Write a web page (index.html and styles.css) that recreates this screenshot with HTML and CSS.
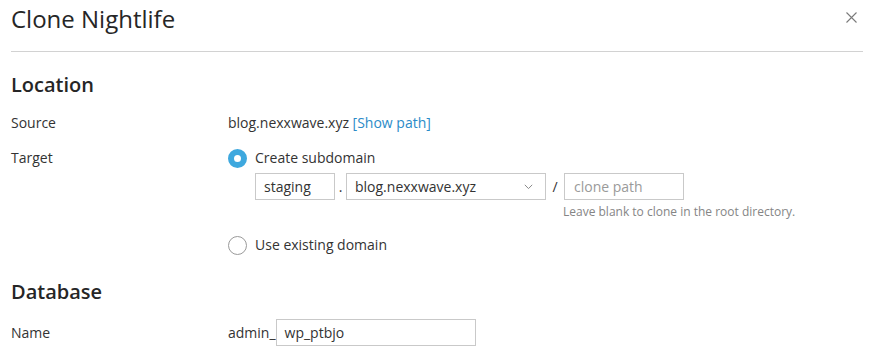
FILE: index.html
```html
<!DOCTYPE html>
<html lang="en">
<head>
<meta charset="utf-8">
<title>Clone Nightlife</title>
<link rel="stylesheet" href="styles.css">
</head>
<body>
<div class="dialog">
  <header class="dialog-header">
    <h1 class="dialog-title">Clone Nightlife</h1>
    <button class="close-btn" aria-label="Close">
      <svg width="11" height="11" viewBox="0 0 11 11"><path d="M0.5 0.5 L10.5 10.5 M10.5 0.5 L0.5 10.5" stroke="#7a7a7a" stroke-width="1.1" fill="none"/></svg>
    </button>
  </header>

  <section class="section">
    <h2 class="section-title">Location</h2>
    <div class="row row-source">
      <div class="label">Source</div>
      <div class="value">blog.nexxwave.xyz <a class="link" href="#">[Show path]</a></div>
    </div>
    <div class="row row-target">
      <div class="label">Target</div>
      <div class="value">
        <label class="radio-line">
          <span class="radio radio-checked"></span>
          <span>Create subdomain</span>
        </label>
        <div class="sub-fields">
          <div class="input input-sub">staging</div>
          <span class="sep">.</span>
          <div class="input select">
            <span>blog.nexxwave.xyz</span>
            <svg class="chevron" width="9" height="6" viewBox="0 0 9 6"><path d="M0.8 0.8 L4.5 4.6 L8.2 0.8" stroke="#8a8a8a" stroke-width="1" fill="none"/></svg>
          </div>
          <span class="sep sep-slash">/</span>
          <div class="path-col">
            <div class="input input-path placeholder">clone path</div>
          </div>
        </div>
        <div class="hint">Leave blank to clone in the root directory.</div>
        <label class="radio-line radio-line-2">
          <span class="radio"></span>
          <span>Use existing domain</span>
        </label>
      </div>
    </div>
  </section>

  <section class="section section-db">
    <h2 class="section-title">Database</h2>
    <div class="row row-name">
      <div class="label">Name</div>
      <div class="value value-inline">
        <span class="prefix">admin_</span>
        <div class="input input-name">wp_ptbjo</div>
      </div>
    </div>
  </section>
</div>
</body>
</html>
```

FILE: styles.css
```css
* { box-sizing: border-box; }

html, body {
  margin: 0;
  padding: 0;
  background: #ffffff;
}

body {
  font-family: "Open Sans", "Liberation Sans", sans-serif;
  font-size: 14px;
  line-height: 18px;
  color: #333333;
}

.dialog {
  padding: 0 19px 0 11px;
}

.dialog-header {
  display: flex;
  align-items: flex-start;
  justify-content: space-between;
  padding-top: 4px;
  padding-bottom: 17px;
  border-bottom: 1px solid #d2d2d2;
}

.dialog-title {
  margin: 0;
  font-size: 24px;
  line-height: 30px;
  font-weight: 400;
  color: #262626;
}

.close-btn {
  margin: 8px 6px 0 0;
  padding: 0;
  border: 0;
  background: none;
  width: 11px;
  height: 11px;
  display: flex;
}

.section-title {
  margin: 21px 0 0;
  font-size: 20px;
  line-height: 24px;
  font-weight: 600;
  color: #262626;
}

.section-db .section-title {
  margin-top: 26px;
}

.row {
  display: grid;
  grid-template-columns: 217px 1fr;
  margin-top: 17px;
}

.row-name {
  margin-top: 15px;
  align-items: center;
}

.value-inline {
  display: flex;
  align-items: center;
}

.link {
  color: #2b8bc8;
  text-decoration: none;
}

.radio-line {
  display: flex;
  align-items: center;
  gap: 8px;
  height: 18px;
}

.radio-line-2 {
  margin-top: 16px;
}

.radio {
  width: 19px;
  height: 19px;
  border-radius: 50%;
  border: 1px solid #9a9a9a;
  background: #fff;
  flex: none;
}

.radio-checked {
  border: 6px solid #3ea8de;
  background: #ffffff;
}

.sub-fields {
  display: flex;
  align-items: flex-start;
  margin-top: 6px;
  margin-left: 27px;
}

.input {
  height: 27px;
  border: 1px solid #c9c9c9;
  padding: 0 8px;
  display: flex;
  align-items: center;
  background: #fff;
  color: #333;
}

.input-sub { width: 80px; }

.sep {
  width: 11px;
  text-align: center;
  line-height: 27px;
}

.sep-slash {
  width: 18px;
}

.select {
  width: 200px;
  justify-content: space-between;
  padding-right: 12px;
}

.chevron { margin-top: 1px; }

.input-path {
  width: 120px;
  padding-left: 9px;
}

.placeholder { color: #9a9a9a; }

.hint {
  margin: 4px 0 0 335px;
  font-size: 12px;
  line-height: 16px;
  color: #858585;
}

.input-name {
  width: 200px;
  padding-left: 8px;
}
```
